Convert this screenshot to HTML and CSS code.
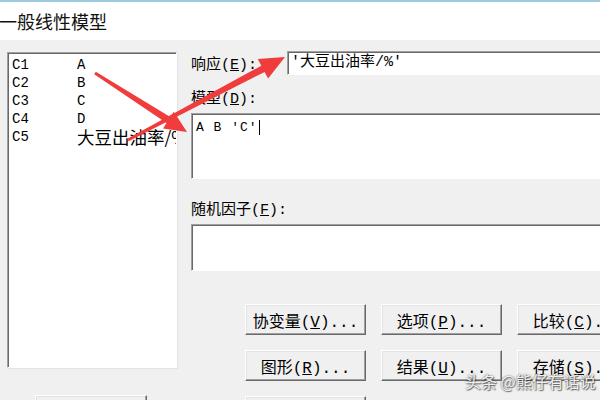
FILE: index.html
```html
<!DOCTYPE html>
<html lang="zh-CN">
<head>
    <meta charset="UTF-8">
    <title>一般线性模型</title>
    <link rel="stylesheet" href="styles.css">
</head>
<body>
    <div class="titlebar">
        <h1>一般线性模型</h1>
    </div>

    <div class="dialog">
        <div class="left">
            <ul class="varlist">
                <li><span class="col">C1</span><span>A</span></li>
                <li><span class="col">C2</span><span>B</span></li>
                <li><span class="col">C3</span><span>C</span></li>
                <li><span class="col">C4</span><span>D</span></li>
                <li><span class="col">C5</span><span class="cjk">大豆出油率/%</span></li>
            </ul>
            <button class="btn btn-wide"></button>
        </div>

        <div class="right">
            <div class="row">
                <label>响应(<u>E</u>):</label>
                <div class="box box-line">'大豆出油率/%'</div>
            </div>

            <label class="stack">模型(<u>D</u>):</label>
            <div class="box box-model">A B 'C'<span class="caret"></span></div>

            <label class="stack stack-gap">随机因子(<u>F</u>):</label>
            <div class="box box-random"></div>

            <div class="buttons">
                <button class="btn">协变量(<u>V</u>)...</button>
                <button class="btn">选项(<u>P</u>)...</button>
                <button class="btn">比较(<u>C</u>)...</button>
                <button class="btn">图形(<u>R</u>)...</button>
                <button class="btn">结果(<u>U</u>)...</button>
                <button class="btn">存储(<u>S</u>)...</button>
                <button class="btn"></button>
            </div>
        </div>
    </div>

    <!-- 标注箭头 -->
    <svg class="arrows" width="600" height="400" viewBox="0 0 600 400">
        <polygon points="94.2,74.3 166.5,123.1 163,128.5 187,132 173.8,111.7 170.3,117.1 95.8,71.7"/>
        <polygon points="128.7,141.3 264.6,71.9 268.1,78.5 285,57 257.8,59.1 261.3,65.7 127.3,138.7"/>
    </svg>

    <div class="watermark">头条 @熊仔有话说</div>
</body>
</html>
```

FILE: styles.css
```css
/* 全局 */
body {
    margin: 0;
    width: 600px;
    height: 400px;
    overflow: hidden;
    position: relative;
    background: #f0f0f0;
    color: #000;
    font-family: "Liberation Mono", "Noto Sans CJK SC", monospace;
    font-size: 15px;
}

/* 标题栏 */
.titlebar {
    height: 38px;
    border-top: 2px solid #9fcbe2;
    background: #fff;
    display: flex;
    align-items: center;
}

h1 {
    margin: 0 0 0 -1px;
    font: 400 18px "Noto Sans CJK SC", sans-serif;
    color: #111;
}

.dialog {
    display: flex;
    padding-top: 11px;
}

/* 左侧变量列表 */
.left {
    flex: none;
    width: 177px;
    padding: 1px 0 0 7px;
    box-sizing: border-box;
}

.varlist {
    margin: 0;
    padding: 3px 0 0 4px;
    list-style: none;
    width: 170px;
    height: 316px;
    box-sizing: border-box;
    background: #fff;
    border: 1px solid;
    border-color: #a0a0a0 #fff #fff #a0a0a0;
    box-shadow: inset 1px 1px #696969, 1px 1px #e3e3e3;
    overflow: hidden;
}

.varlist li {
    display: flex;
    height: 18px;
    line-height: 18px;
    font-size: 14px;
    white-space: nowrap;
}

.col {
    flex: none;
    width: 65px;
}

.cjk {
    font-family: "Noto Sans CJK SC", sans-serif;
    font-size: 17.5px;
}

/* 右侧输入区 */
.right {
    flex: none;
    width: 440px;
    margin-left: 14px;
}

.row {
    display: flex;
    align-items: center;
    height: 24px;
}

.row label {
    flex: none;
    width: 96px;
}

.stack {
    display: block;
    line-height: 18px;
    margin-top: 16px;
}

.stack-gap {
    margin-top: 23px;
}

.box {
    background: #fff;
    border: 1px solid;
    border-color: #a0a0a0 #fff #fff #a0a0a0;
    box-shadow: inset 1px 1px #696969;
    box-sizing: border-box;
}

.box-line {
    flex: 1;
    height: 24px;
    line-height: 22px;
    padding-left: 3px;
    white-space: nowrap;
}

.box-model {
    margin-top: 4px;
    height: 66px;
    padding: 6px 0 0 4px;
    font-size: 13px;
    line-height: 16px;
    letter-spacing: 1px;
}

.caret {
    display: inline-block;
    width: 1px;
    height: 15px;
    margin-left: 1px;
    background: #000;
    vertical-align: middle;
}

.box-random {
    margin-top: 4px;
    height: 47px;
}

/* 按钮 */
.buttons {
    display: grid;
    grid-template-columns: repeat(3, 121px);
    grid-auto-rows: 31px;
    gap: 15px;
    margin: 33px 0 0 54px;
}

.btn {
    padding: 0;
    height: 31px;
    font: inherit;
    font-size: 16px;
    color: #000;
    white-space: nowrap;
    background: #f0f0f0;
    border: 1px solid;
    border-color: #fff #696969 #696969 #fff;
    box-shadow: inset -1px -1px #a0a0a0, inset 1px 1px #e3e3e3;
}

.btn-wide {
    display: block;
    width: 112px;
    margin: 27px 0 0 28px;
}

/* 红色箭头 */
.arrows {
    position: absolute;
    left: 0;
    top: 0;
    pointer-events: none;
}

.arrows polygon {
    fill: #f03c3c;
}

/* 水印 */
.watermark {
    position: absolute;
    left: 465px;
    top: 369px;
    font: 16px "Noto Sans CJK SC", sans-serif;
    color: rgba(255, 255, 255, 0.9);
    text-shadow: 0 0 2px #444, 1px 1px 1px rgba(0, 0, 0, 0.5);
    white-space: nowrap;
}
```
